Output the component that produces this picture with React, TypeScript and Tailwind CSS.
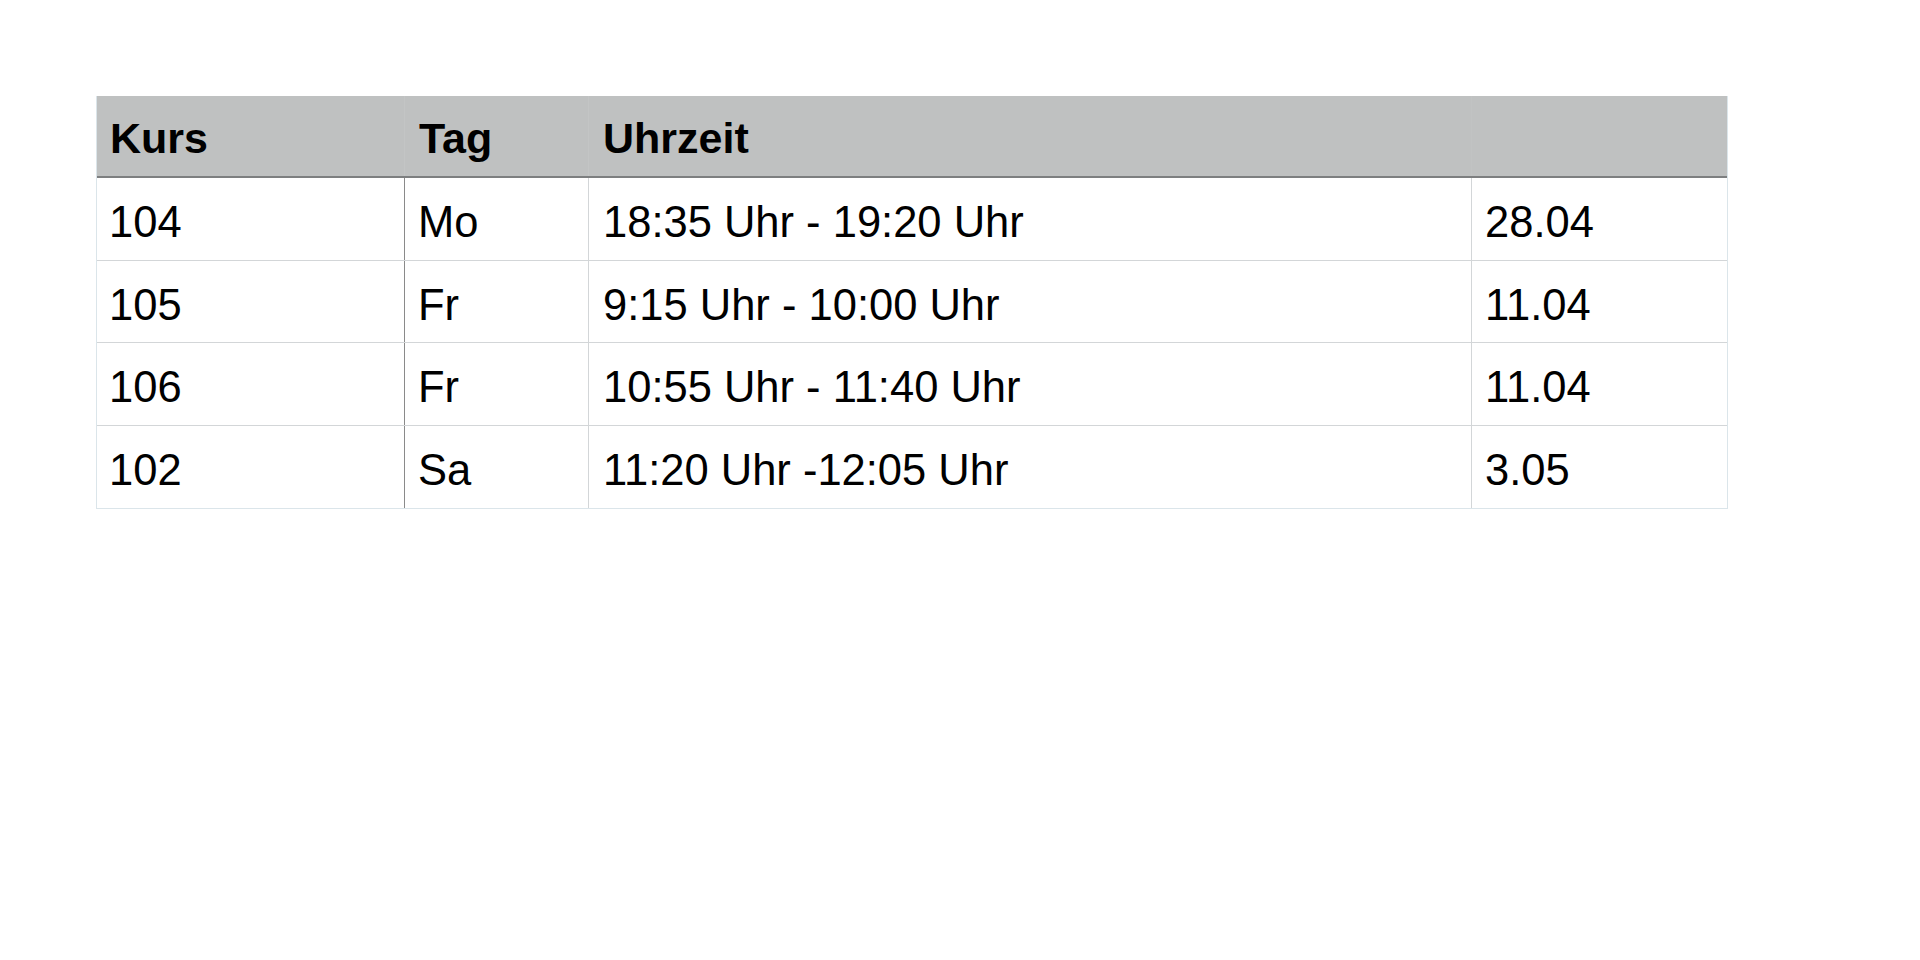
import React from "react";

const rows = [
  ["104", "Mo", "18:35 Uhr - 19:20 Uhr", "28.04"],
  ["105", "Fr", "9:15 Uhr - 10:00 Uhr", "11.04"],
  ["106", "Fr", "10:55 Uhr - 11:40 Uhr", "11.04"],
  ["102", "Sa", "11:20 Uhr -12:05 Uhr", "3.05"],
];

const heights = ["h-[83px]", "h-[82px]", "h-[83px]", "h-[82px]"];

export default function App() {
  return (
    <div
      className="w-[1920px] h-[960px] bg-white text-black"
      style={{ fontFamily: '"Liberation Sans", Arial, sans-serif' }}
    >
      <div className="pt-[96px] pl-[96px]">
        <div className="w-[1632px] border-r border-b border-l border-[#dbe5ea]">
          <div className="grid grid-cols-[307px_184px_883px_257px] h-[82px] bg-[#bfc1c1] border-b-2 border-[#7d7f80] text-[43px] font-bold">
            <div className="flex items-center pl-[13px] pt-[4px]">Kurs</div>
            <div className="flex items-center pl-[14px] pt-[4px] border-l border-[#c3c5c5]">Tag</div>
            <div className="flex items-center pl-[14px] pt-[4px] border-l border-[#c3c5c5]">Uhrzeit</div>
            <div className="border-l border-[#c1c3c3]"></div>
          </div>
          {rows.map((r, i) => (
            <div
              key={i}
              className={`grid grid-cols-[307px_184px_883px_257px] ${heights[i]} text-[43.5px] ${i < rows.length - 1 ? "border-b border-[#d3d6d8]" : ""}`}
            >
              <div className="flex items-center pl-[12px] pt-[8px]">{r[0]}</div>
              <div className="flex items-center pl-[13px] pt-[8px] border-l border-[#8a8a8a]">{r[1]}</div>
              <div className="flex items-center pl-[14px] pt-[8px] border-l border-[#d3d6d8]">{r[2]}</div>
              <div className="flex items-center pl-[13px] pt-[8px] border-l border-[#d3d6d8]">{r[3]}</div>
            </div>
          ))}
        </div>
      </div>
    </div>
  );
}
